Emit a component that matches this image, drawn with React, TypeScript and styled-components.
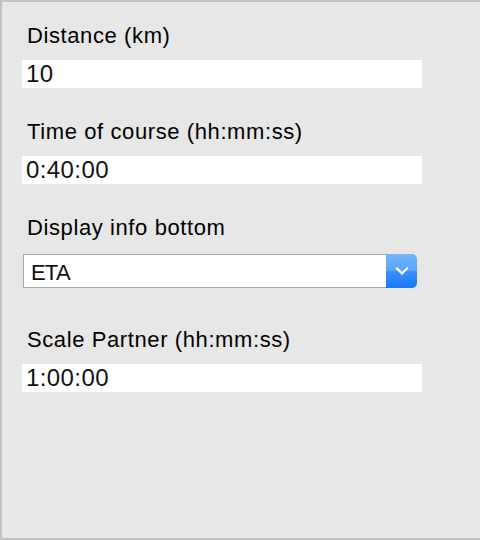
import React from "react";
import styled, { createGlobalStyle } from "styled-components";

const Global = createGlobalStyle`
  html, body { margin: 0; padding: 0; background: #e7e7e7; }
  * { box-sizing: border-box; }
`;

const Panel = styled.div`
  width: 480px;
  height: 540px;
  background: #e7e7e7;
  border-top: 2px solid #c3c3c3;
  border-left: 2px solid #c3c3c3;
  border-bottom: 2px solid #c3c3c3;
  padding: 21px 0 0 20px;
  display: flex;
  flex-direction: column;
  font-family: "Liberation Sans", Helvetica, Arial, sans-serif;
  font-size: 22px;
  letter-spacing: 0.6px;
  color: #000;
`;

const Field = styled.div<{ $after: number }>`
  display: flex;
  flex-direction: column;
  margin-bottom: ${(p) => p.$after}px;
`;

const Label = styled.label<{ $gap: number }>`
  display: block;
  height: 26px;
  line-height: 26px;
  padding-left: 5px;
  margin-bottom: ${(p) => p.$gap}px;
`;

const TextInput = styled.input`
  width: 400px;
  height: 28px;
  line-height: 28px;
  border: none;
  outline: none;
  margin: 0;
  padding: 0 0 0 4px;
  background: #fff;
  font-family: inherit;
  font-size: 24px;
  letter-spacing: 0.4px;
  color: #111;
`;

const SelectBox = styled.div`
  display: flex;
  width: 394px;
  height: 34px;
  margin-left: 1px;
`;

const SelectValue = styled.div`
  flex: 1;
  background: #fff;
  border: 1px solid #a9a9a9;
  border-right: none;
  padding: 4px 0 0 7px;
  line-height: 28px;
  letter-spacing: -0.8px;
  color: #111;
`;

const ArrowButton = styled.div`
  width: 31px;
  height: 34px;
  border-radius: 0 5px 5px 0;
  background: linear-gradient(#73b4fc 0%, #5ba4fa 48%, #3a8ef9 52%, #1a79f6 100%);
  display: flex;
  align-items: center;
  justify-content: center;
`;

function Chevron() {
  return (
    <svg width="14" height="10" viewBox="0 0 14 10">
      <path d="M2 2.5 L7 7.5 L12 2.5" fill="none" stroke="#fff" strokeWidth="2.4" strokeLinecap="round" strokeLinejoin="round" />
    </svg>
  );
}

export default function App() {
  return (
    <>
      <Global />
      <Panel>
        <Field $after={31}>
          <Label $gap={11}>Distance (km)</Label>
          <TextInput defaultValue="10" />
        </Field>
        <Field $after={31}>
          <Label $gap={11}>Time of course (hh:mm:ss)</Label>
          <TextInput defaultValue="0:40:00" />
        </Field>
        <Field $after={39}>
          <Label $gap={13}>Display info bottom</Label>
          <SelectBox>
            <SelectValue>ETA</SelectValue>
            <ArrowButton>
              <Chevron />
            </ArrowButton>
          </SelectBox>
        </Field>
        <Field $after={0}>
          <Label $gap={11}>Scale Partner (hh:mm:ss)</Label>
          <TextInput defaultValue="1:00:00" />
        </Field>
      </Panel>
    </>
  );
}
